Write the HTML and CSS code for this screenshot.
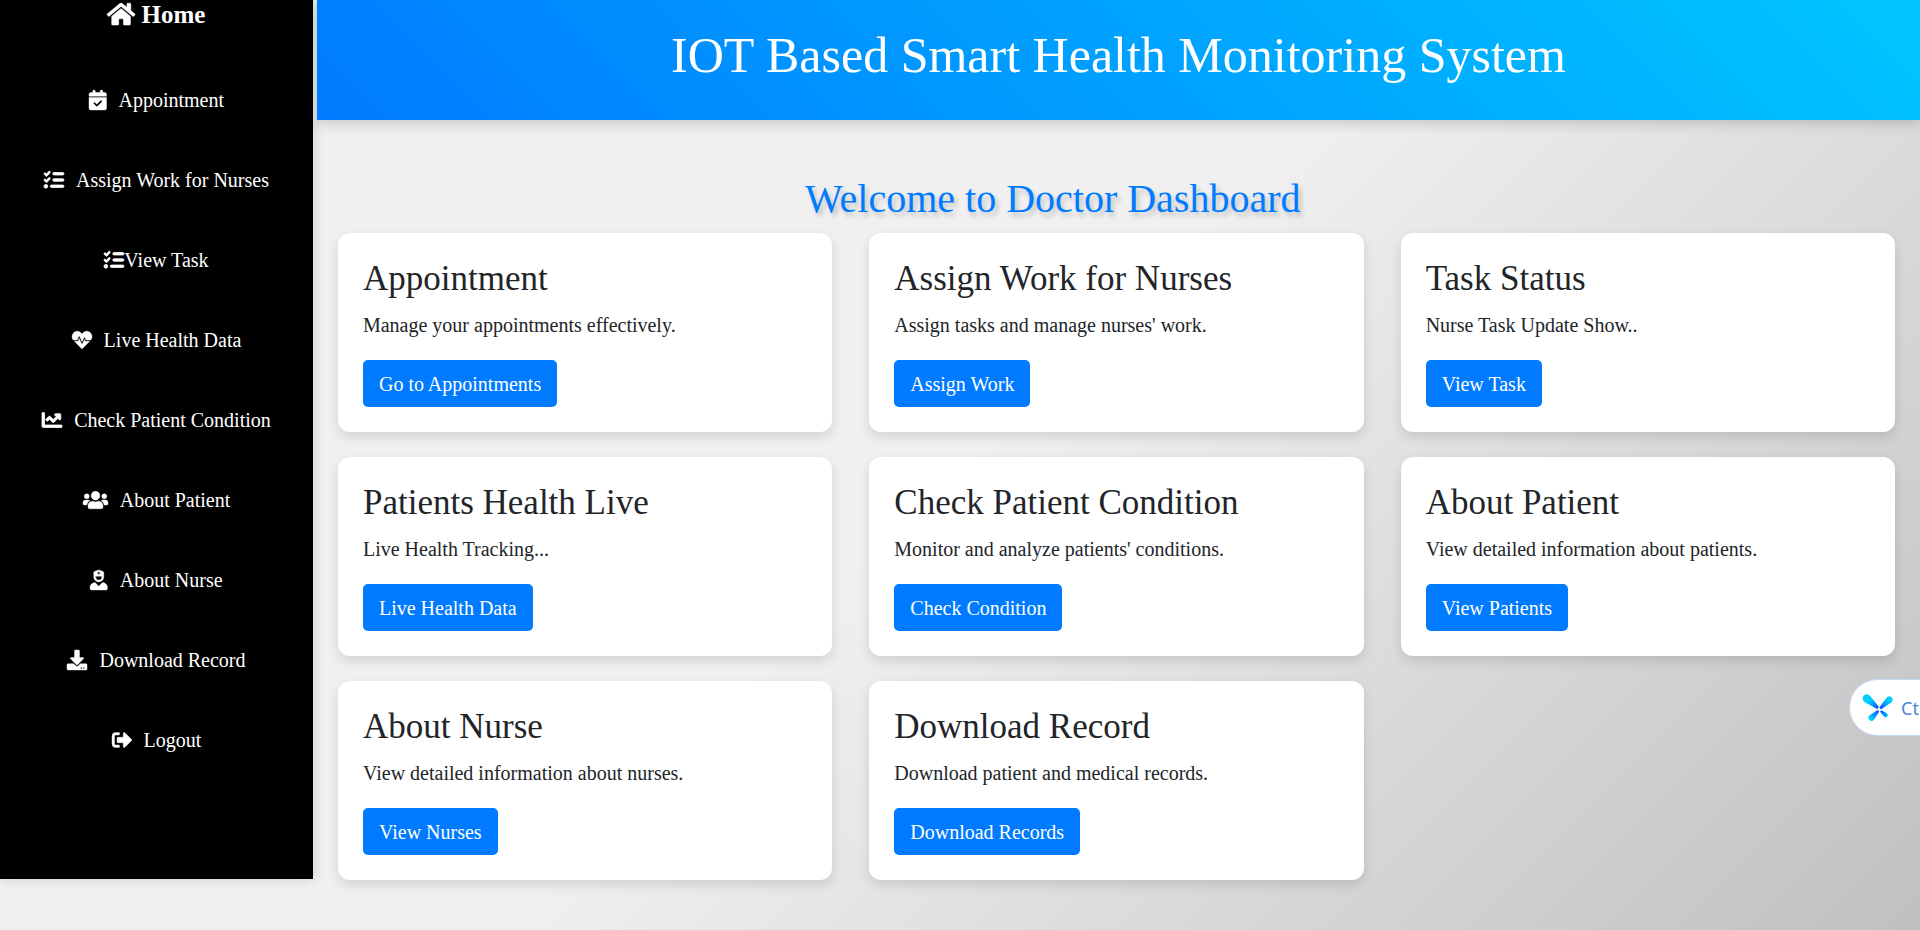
FILE: index.html
```html
<!DOCTYPE html>
<html lang="en">
<head>
<meta charset="utf-8">
<title>Doctor Dashboard</title>
<link rel="stylesheet" href="styles.css">
</head>
<body>
<div class="layout">
  <nav class="sidebar" aria-label="Main">
    <a class="brand" href="#"><svg class="icon" viewBox="0 28 576 512" aria-hidden="true"><path d="M280.400 148.300 96 300.100V464a16 16 0 0 0 16 16l112.100-.3a16 16 0 0 0 15.900-16V368a16 16 0 0 1 16-16h64a16 16 0 0 1 16 16v95.600a16 16 0 0 0 16 16.100L464 480a16 16 0 0 0 16-16V300L295.700 148.300a12.200 12.200 0 0 0-15.300 0zM571.600 251.500 488 182.600V44.100a12 12 0 0 0-12-12h-56a12 12 0 0 0-12 12v72.600L318.500 43a48 48 0 0 0-61 0L4.300 251.500a12 12 0 0 0-1.600 16.900l25.500 31a12 12 0 0 0 16.900 1.600l235.200-193.700a12.200 12.200 0 0 1 15.300 0L530.900 301a12 12 0 0 0 16.900-1.600l25.500-31a12 12 0 0 0-1.700-16.900z"/></svg><span>Home</span></a>
    <a class="nav-link" href="#"><svg class="icon" viewBox="0 0 448 512" aria-hidden="true"><path d="M128 0c17.700 0 32 14.300 32 32v32h128V32c0-17.700 14.300-32 32-32s32 14.300 32 32v32h48c26.500 0 48 21.500 48 48v48H0v-48c0-26.500 21.500-48 48-48h48V32c0-17.700 14.300-32 32-32zM0 192h448v272c0 26.500-21.500 48-48 48H48c-26.500 0-48-21.500-48-48V192zm329 113c9.400-9.400 9.400-24.600 0-33.900s-24.600-9.400-33.900 0l-95 95-47-47c-9.400-9.400-24.600-9.400-33.900 0s-9.400 24.600 0 33.900l64 64c9.400 9.400 24.600 9.400 33.900 0L329 305z"/></svg><span>Appointment</span></a>
    <a class="nav-link" href="#"><svg class="icon icon-bold" viewBox="0 0 512 512" aria-hidden="true"><path d="M152.100 38.200c9.900 8.900 10.700 24 1.800 33.900l-72 80c-4.400 4.900-10.600 7.800-17.200 7.900s-12.900-2.400-17.600-7L7 113c-9.300-9.400-9.300-24.600 0-34s24.600-9.400 33.900 0l22.100 22.100 55.100-61.200c8.900-9.900 24-10.700 33.900-1.800zm0 160c9.900 8.900 10.700 24 1.800 33.900l-72 80c-4.400 4.900-10.600 7.800-17.200 7.900s-12.900-2.400-17.600-7L7 273c-9.400-9.400-9.400-24.600 0-33.900s24.600-9.400 33.900 0l22.100 22.100 55.100-61.200c8.900-9.900 24-10.700 33.900-1.800zM224 96c0-17.700 14.300-32 32-32h224c17.700 0 32 14.300 32 32s-14.300 32-32 32H256c-17.700 0-32-14.300-32-32zm0 160c0-17.700 14.300-32 32-32h224c17.700 0 32 14.300 32 32s-14.300 32-32 32H256c-17.700 0-32-14.300-32-32zm-64 160c0-17.700 14.300-32 32-32h288c17.700 0 32 14.300 32 32s-14.300 32-32 32H192c-17.700 0-32-14.300-32-32zM48 368a48 48 0 1 1 0 96 48 48 0 1 1 0-96z"/></svg><span>Assign Work for Nurses</span></a>
    <a class="nav-link nav-link-tight" href="#"><svg class="icon icon-bold" viewBox="0 0 512 512" aria-hidden="true"><path d="M152.100 38.200c9.900 8.900 10.700 24 1.800 33.900l-72 80c-4.400 4.900-10.600 7.800-17.200 7.900s-12.900-2.400-17.600-7L7 113c-9.300-9.400-9.300-24.600 0-34s24.600-9.400 33.900 0l22.100 22.100 55.100-61.200c8.900-9.900 24-10.700 33.900-1.800zm0 160c9.900 8.900 10.700 24 1.800 33.900l-72 80c-4.400 4.900-10.600 7.800-17.200 7.900s-12.900-2.400-17.600-7L7 273c-9.400-9.400-9.400-24.600 0-33.900s24.600-9.400 33.900 0l22.100 22.100 55.100-61.200c8.900-9.900 24-10.700 33.900-1.800zM224 96c0-17.700 14.300-32 32-32h224c17.700 0 32 14.300 32 32s-14.300 32-32 32H256c-17.700 0-32-14.300-32-32zm0 160c0-17.700 14.300-32 32-32h224c17.700 0 32 14.300 32 32s-14.300 32-32 32H256c-17.700 0-32-14.300-32-32zm-64 160c0-17.700 14.300-32 32-32h288c17.700 0 32 14.300 32 32s-14.300 32-32 32H192c-17.700 0-32-14.300-32-32zM48 368a48 48 0 1 1 0 96 48 48 0 1 1 0-96z"/></svg><span>View Task</span></a>
    <a class="nav-link" href="#"><svg class="icon" viewBox="0 0 512 512" aria-hidden="true"><path d="M320.200 243.800l-49.700 99.400c-6 12.100-23.400 11.700-28.900-.6l-56.900-126.300-30 71.700H60.600l182.500 186.500c7.100 7.300 18.600 7.300 25.700 0L451.400 288H342.300l-22.100-44.200zM473.700 73.900l-2.400-2.500c-51.500-52.600-135.800-52.600-187.400 0L256 100l-27.900-28.500c-51.500-52.700-135.900-52.700-187.400 0l-2.400 2.400C-10.400 123.700-12.500 203 31 256h102.400l35.900-86.200c5.400-12.900 23.600-13.200 29.400-.4l58.200 129.300 49-97.900c5.900-11.800 22.700-11.800 28.600 0l27.600 55.200H481c43.500-53 41.400-132.300-7.300-182.100z"/></svg><span>Live Health Data</span></a>
    <a class="nav-link" href="#"><svg class="icon icon-bold" viewBox="0 0 512 512" aria-hidden="true"><path d="M496 384H64V80a16 16 0 0 0-16-16H16A16 16 0 0 0 0 80v336a32 32 0 0 0 32 32h464a16 16 0 0 0 16-16v-32a16 16 0 0 0-16-16zM464 96H345.900c-21.400 0-32.100 25.900-17 41l32.400 32.400L288 242.700l-73.400-73.300a32 32 0 0 0-45.200 0l-68.700 68.700a16 16 0 0 0 0 22.600l22.600 22.600a16 16 0 0 0 22.600 0L192 237.300l73.400 73.300a32 32 0 0 0 45.200 0l96-96L439 247c15.100 15.100 41 4.400 41-17V112a16 16 0 0 0-16-16z"/></svg><span>Check Patient Condition</span></a>
    <a class="nav-link" href="#"><svg class="icon" viewBox="0 0 640 512" aria-hidden="true"><path d="M96 224a64 64 0 1 0 0-128 64 64 0 0 0 0 128zm448 0a64 64 0 1 0 0-128 64 64 0 0 0 0 128zm32 32h-64a63.800 63.800 0 0 0-45.100 18.600c40.300 22.100 68.900 62 75.100 109.400h66a32 32 0 0 0 32-32v-32a64 64 0 0 0-64-64zm-256 0a112 112 0 1 0 0-224 112 112 0 0 0 0 224zm76.800 32h-8.300a157.500 157.500 0 0 1-137 0h-8.300A115.200 115.200 0 0 0 128 403.200V432a48 48 0 0 0 48 48h288a48 48 0 0 0 48-48v-28.800A115.200 115.200 0 0 0 396.800 288zm-223.700-13.400A63.800 63.800 0 0 0 128 256H64a64 64 0 0 0-64 64v32a32 32 0 0 0 32 32h65.900c6.300-47.400 34.900-87.300 75.200-109.400z"/></svg><span>About Patient</span></a>
    <a class="nav-link" href="#"><svg class="icon" viewBox="0 0 448 512" aria-hidden="true"><path d="M319.400 320 224 415.400 128.600 320C57.100 323.100 0 381.600 0 453.800V464a48 48 0 0 0 48 48h352a48 48 0 0 0 48-48v-10.200c0-72.200-57.100-130.700-128.600-133.800zM224 304a128 128 0 0 0 128-128V65.800a32 32 0 0 0-20.800-30L246.500 4.100a64 64 0 0 0-45 0L116.800 35.900A32 32 0 0 0 96 65.800V176a128 128 0 0 0 128 128zM184 71.700a5.300 5.300 0 0 1 5.300-5.400h21.400V45a5.300 5.300 0 0 1 5.300-5.300h16a5.300 5.300 0 0 1 5.300 5.300v21.400h21.400a5.300 5.300 0 0 1 5.300 5.300v16a5.300 5.300 0 0 1-5.300 5.300h-21.400v21.400a5.300 5.300 0 0 1-5.300 5.300h-16a5.300 5.300 0 0 1-5.300-5.300V93h-21.400a5.300 5.300 0 0 1-5.300-5.300zM144 160h160v16a80 80 0 0 1-160 0z"/></svg><span>About Nurse</span></a>
    <a class="nav-link" href="#"><svg class="icon" viewBox="0 0 512 512" aria-hidden="true"><path d="M216 0h80a24 24 0 0 1 24 24v168h87.700c17.800 0 26.700 21.500 14.100 34.100L269.700 378.300a19.400 19.400 0 0 1-27.300 0L90.100 226.100C77.500 213.500 86.400 192 104.200 192H192V24a24 24 0 0 1 24-24zm296 376v112a24 24 0 0 1-24 24H24a24 24 0 0 1-24-24V376a24 24 0 0 1 24-24h146.700l49 49a51.200 51.200 0 0 0 72.600 0l49-49H488a24 24 0 0 1 24 24zM388 464a20 20 0 1 0-40 0 20 20 0 0 0 40 0zm64 0a20 20 0 1 0-40 0 20 20 0 0 0 40 0z"/></svg><span>Download Record</span></a>
    <a class="nav-link" href="#"><svg class="icon" viewBox="0 0 512 512" aria-hidden="true"><path d="M497 273 329 441c-15 15-41 4.500-41-17v-96H152a24 24 0 0 1-24-24v-96a24 24 0 0 1 24-24h136V88c0-21.400 25.900-32 41-17l168 168a24.200 24.200 0 0 1 0 34zM192 436v-40a12 12 0 0 0-12-12H96a32 32 0 0 1-32-32V160a32 32 0 0 1 32-32h84a12 12 0 0 0 12-12V76a12 12 0 0 0-12-12H96a96 96 0 0 0-96 96v192a96 96 0 0 0 96 96h84a12 12 0 0 0 12-12z"/></svg><span>Logout</span></a>
  </nav>
  <main class="main">
    <header class="banner"><h1 class="banner-title">IOT Based Smart Health Monitoring System</h1></header>
    <h2 class="welcome">Welcome to Doctor Dashboard</h2>
    <div class="cards">
      <section class="card"><h3 class="card-title">Appointment</h3><p class="card-text">Manage your appointments effectively.</p><a class="btn" href="#">Go to Appointments</a></section>
      <section class="card"><h3 class="card-title">Assign Work for Nurses</h3><p class="card-text">Assign tasks and manage nurses' work.</p><a class="btn" href="#">Assign Work</a></section>
      <section class="card"><h3 class="card-title">Task Status</h3><p class="card-text">Nurse Task Update Show..</p><a class="btn" href="#">View Task</a></section>
      <section class="card"><h3 class="card-title">Patients Health Live</h3><p class="card-text">Live Health Tracking...</p><a class="btn" href="#">Live Health Data</a></section>
      <section class="card"><h3 class="card-title">Check Patient Condition</h3><p class="card-text">Monitor and analyze patients' conditions.</p><a class="btn" href="#">Check Condition</a></section>
      <section class="card"><h3 class="card-title">About Patient</h3><p class="card-text">View detailed information about patients.</p><a class="btn" href="#">View Patients</a></section>
      <section class="card"><h3 class="card-title">About Nurse</h3><p class="card-text">View detailed information about nurses.</p><a class="btn" href="#">View Nurses</a></section>
      <section class="card"><h3 class="card-title">Download Record</h3><p class="card-text">Download patient and medical records.</p><a class="btn" href="#">Download Records</a></section>
    </div>
  </main>
</div>
<button class="assistant" type="button">
  <svg class="assistant-icon" viewBox="0 0 32 28" aria-hidden="true">
    <defs>
      <radialGradient id="petal" gradientUnits="userSpaceOnUse" cx="17" cy="15" r="16"><stop offset="0.1" stop-color="#0a4dff"/><stop offset="0.75" stop-color="#00ccff"/></radialGradient>
    </defs>
    <g fill="url(#petal)">
      <path d="M14.200 14.400 2.800 8.200A4.200 4.200 0 1 1 8.600 2.600L16.400 12.200A1.600 1.600 0 0 1 14.200 14.400z"/>
      <path d="M18.200 12.200 24.200 4.200A3.400 3.400 0 1 1 29.600 8.200L20.400 14.600A1.600 1.600 0 0 1 18.200 12.200z"/>
      <path d="M16.800 18.200 12 25.800A3.100 3.100 0 1 1 7.400 21.600L14.800 16.400A1.400 1.400 0 0 1 16.800 18.200z"/>
      <path d="M20 16.400 25 19.400A2.200 2.200 0 1 1 22 22.600L18.200 18A1.400 1.400 0 0 1 20 16.400z"/>
    </g>
  </svg>
  <span>Ctrl+J</span>
</button>
</body>
</html>
```
FILE: styles.css
```css
* { box-sizing: border-box; }

body {
  margin: 0;
  min-height: 100vh;
  font: 20px/30px "Liberation Serif", "Times New Roman", serif;
  color: #212529;
  background: linear-gradient(135deg, #f0f0f0 50%, #c0c0c0);
  overflow-x: hidden;
}

a { text-decoration: none; }

.layout {
  display: flex;
  align-items: flex-start;
  gap: 4px;
}

.sidebar {
  display: flex;
  flex-direction: column;
  flex: none;
  width: 16.3%;
  padding-bottom: 99px;
  background: #000;
  box-shadow: 0 0 12px rgba(0, 0, 0, 0.15);
}

.brand,
.nav-link {
  display: flex;
  align-items: center;
  justify-content: center;
  color: #fff;
}

.brand {
  gap: 6px;
  margin-bottom: 30px;
  font-size: 25px;
  font-weight: bold;
}

.nav-link {
  gap: 12px;
  padding: 25px 0;
}

.nav-link-tight { gap: 0; }

.icon {
  height: 1em;
  fill: currentColor;
  stroke: currentColor;
  stroke-width: 10px;
  overflow: visible;
}

.icon-bold { stroke-width: 20px; }

.main {
  flex: 1;
  min-width: 0;
}

.banner {
  padding: 25px 25px 35px;
  text-align: center;
  color: #fff;
  background: linear-gradient(45deg, #007bff, #00c6ff);
  box-shadow: 0 4px 12px rgba(0, 0, 0, 0.16);
}

.banner-title {
  margin: 0;
  font-size: 50px;
  font-weight: normal;
  line-height: 60px;
}

.welcome {
  margin: 55px 0 10px;
  padding-right: 8.2%;
  font-size: 40px;
  font-weight: normal;
  line-height: 48px;
  text-align: center;
  color: #007bff;
  text-shadow: 3px 4px 5px rgba(0, 0, 0, 0.2);
}

.cards {
  display: grid;
  grid-template-columns: repeat(3, 1fr);
  gap: 25px 37px;
  padding: 0 25px 50px 21px;
}

.card {
  padding: 25px;
  border-radius: 12px;
  background: #fff;
  box-shadow: 0 5px 12px rgba(0, 0, 0, 0.12);
}

.card-title {
  margin: 0 0 10px;
  font-size: 35px;
  font-weight: normal;
  line-height: 42px;
}

.card-text { margin: 0 0 20px; }

.btn {
  display: inline-block;
  padding: 9px 16px 8px;
  border-radius: 5px;
  color: #fff;
  background: #007bff;
  vertical-align: top;
}

.assistant {
  position: fixed;
  top: 679px;
  right: -49px;
  display: flex;
  align-items: center;
  gap: 7px;
  width: 120px;
  height: 57px;
  padding: 0 12px;
  border: 1px solid #c5d8fa;
  border-radius: 29px;
  font: 18px/24px "Noto Sans", sans-serif;
  color: #4a86d8;
  background: #fff;
  white-space: nowrap;
}

.assistant-icon {
  flex: none;
  width: 32px;
  height: 28px;
}
```
